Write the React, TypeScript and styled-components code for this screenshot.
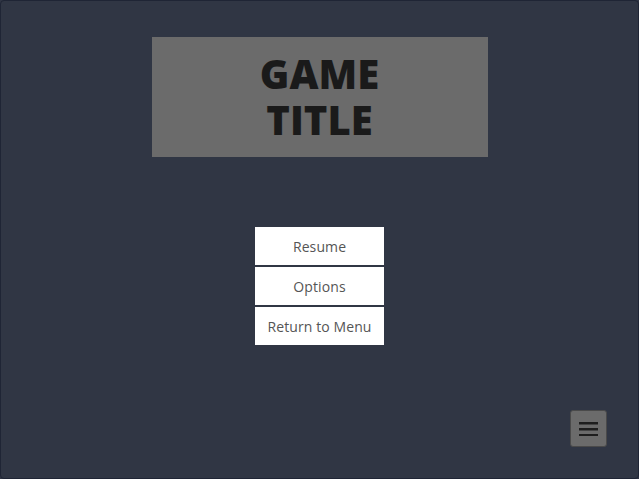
import React from "react";
import styled, { createGlobalStyle } from "styled-components";

const Global = createGlobalStyle`
  html, body { margin: 0; padding: 0; background: #303644; }
  body { font-family: "Open Sans", "Liberation Sans", sans-serif; }
  * { box-sizing: border-box; }
`;

const Screen = styled.div`
  width: 639px;
  height: 479px;
  background: #303644;
  border: 1px solid #1f2535;
  border-radius: 4px;
  display: flex;
  flex-direction: column;
  align-items: center;
  overflow: hidden;
`;

const TitleBox = styled.div`
  margin-top: 36px;
  width: 336px;
  height: 120px;
  background: #6b6b6b;
  display: flex;
  flex-direction: column;
  align-items: center;
  justify-content: center;
`;

const TitleLine = styled.span`
  display: block;
  font-family: "Open Sans", "Liberation Sans", sans-serif;
  font-weight: 800;
  font-size: 40px;
  line-height: 46px;
  color: #1a1a1a;
  text-align: center;
`;

const Menu = styled.nav`
  margin-top: 70px;
  display: flex;
  flex-direction: column;
  gap: 2px;
  width: 129px;
`;

const MenuButton = styled.button`
  height: 38px;
  border: none;
  background: #ffffff;
  color: #555555;
  font-family: "Open Sans", "Liberation Sans", sans-serif;
  font-size: 14px;
  letter-spacing: 0.1px;
  padding: 0;
  cursor: pointer;
`;

const Footer = styled.div`
  margin-top: auto;
  align-self: stretch;
  display: flex;
  justify-content: flex-end;
  padding: 0 31px 31px 0;
`;

const IconButton = styled.button`
  width: 37px;
  height: 37px;
  background: #6b6b6b;
  border: 1px solid #4a4a4a;
  border-radius: 3px;
  padding: 0;
  display: flex;
  align-items: center;
  justify-content: center;
  cursor: pointer;
`;

export default function App() {
  return (
    <>
      <Global />
      <Screen>
        <TitleBox role="heading" aria-level={1}>
          <TitleLine>GAME</TitleLine>
          <TitleLine>TITLE</TitleLine>
        </TitleBox>
        <Menu>
          <MenuButton>Resume</MenuButton>
          <MenuButton>Options</MenuButton>
          <MenuButton>Return to Menu</MenuButton>
        </Menu>
        <Footer>
          <IconButton aria-label="Menu">
            <svg width="19" height="14" viewBox="0 0 19 14">
              <rect x="0" y="0" width="19" height="2.5" fill="#1e1e1e" />
              <rect x="0" y="6" width="19" height="2.5" fill="#1e1e1e" />
              <rect x="0" y="12" width="19" height="2.5" fill="#1e1e1e" />
            </svg>
          </IconButton>
        </Footer>
      </Screen>
    </>
  );
}
